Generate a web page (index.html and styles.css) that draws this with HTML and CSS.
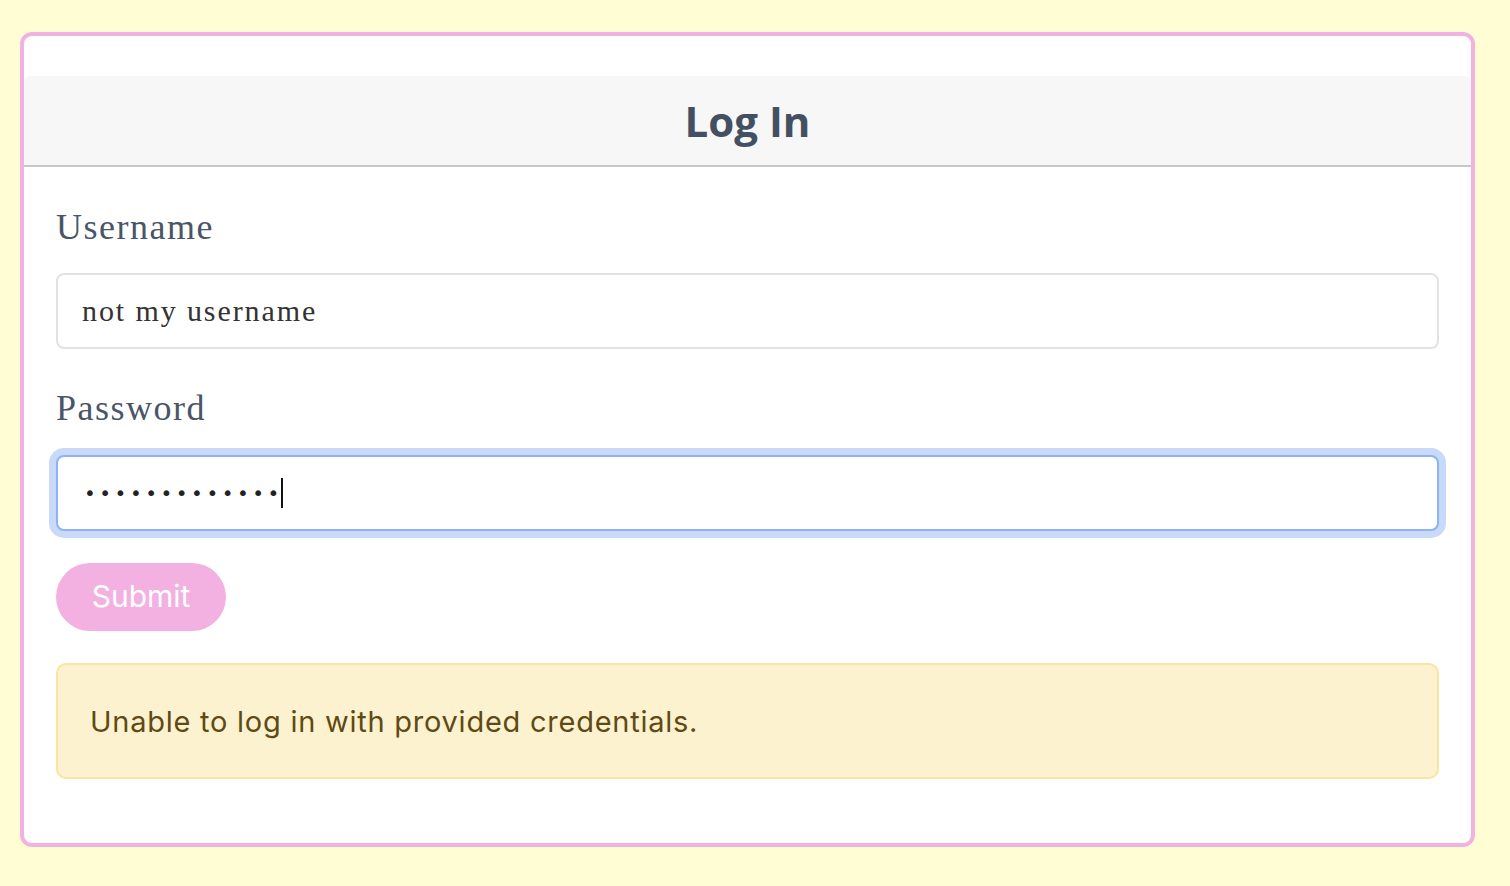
FILE: index.html
```html
<!DOCTYPE html>
<html lang="en">
<head>
<meta charset="utf-8">
<title>Log In</title>
<link rel="stylesheet" href="styles.css">
</head>
<body>
<main class="card">
  <header class="card-header">
    <h1 class="title">Log In</h1>
  </header>
  <form class="card-body">
    <label class="label label-first">Username</label>
    <div class="field"><span class="field-text">not my username</span></div>
    <label class="label">Password</label>
    <div class="field field-focus"><span class="dots">•••••••••••••</span><span class="caret"></span></div>
    <button type="button" class="submit">Submit</button>
    <div class="alert">Unable to log in with provided credentials.</div>
  </form>
</main>
</body>
</html>
```
FILE: styles.css
```css
html, body {
  margin: 0;
  padding: 0;
  background: #fffdd4;
}
body {
  padding: 32px 0 40px 20px;
}
.card {
  box-sizing: border-box;
  width: 1455px;
  background: #ffffff;
  border: 4px solid #f2b1e1;
  border-radius: 12px;
  padding-top: 40px;
}
.card-header {
  height: 89px;
  background: #f7f7f7;
  border-bottom: 2px solid #c8c8c8;
  border-radius: 6px 6px 0 0;
  display: flex;
  align-items: center;
  justify-content: center;
}
.title {
  margin: 0;
  font-family: "Open Sans", sans-serif;
  font-weight: 700;
  font-size: 42px;
  color: #435062;
  line-height: 1;
}
.card-body {
  display: flex;
  flex-direction: column;
  align-items: stretch;
  padding: 0 32px 64px 32px;
}
.label {
  display: block;
  font-family: "Liberation Serif", serif;
  font-size: 36px;
  letter-spacing: 1.5px;
  line-height: 40px;
  color: #4a5567;
  margin-top: 39px;
  margin-bottom: 27px;
}
.label-first {
  margin-top: 40px;
  margin-bottom: 26px;
}
.field {
  box-sizing: border-box;
  height: 76px;
  border: 2px solid #e2e2e2;
  border-radius: 8px;
  background: #fff;
  display: flex;
  align-items: center;
  padding-left: 24px;
}
.field-text {
  font-family: "Liberation Serif", serif;
  font-size: 30px;
  letter-spacing: 1.9px;
  color: #333;
}
.field-focus {
  border-color: #8eb2f2;
  box-shadow: 0 0 0 7px #c9d9f9;
  padding-left: 26px;
}
.dots {
  font-family: "DejaVu Sans", sans-serif;
  font-size: 20px;
  letter-spacing: 3.5px;
  color: #222;
  margin-right: -2px;
}
.caret {
  display: inline-block;
  width: 2px;
  height: 30px;
  background: #111;
}
.submit {
  align-self: flex-start;
  margin-top: 32px;
  width: 170px;
  height: 68px;
  border: none;
  border-radius: 34px;
  background: #f2b1e1;
  color: #ffffff;
  font-family: Inter, sans-serif;
  font-size: 30px;
  padding: 0 0 2px 0;
  cursor: pointer;
}
.alert {
  box-sizing: border-box;
  margin-top: 32px;
  height: 116px;
  background: #fcf2d0;
  border: 2px solid #fbe3a1;
  border-radius: 10px;
  display: flex;
  align-items: center;
  padding: 0 0 0 32px;
  font-family: Inter, sans-serif;
  font-size: 29px;
  letter-spacing: 0.75px;
  color: #5f4a14;
}
```
